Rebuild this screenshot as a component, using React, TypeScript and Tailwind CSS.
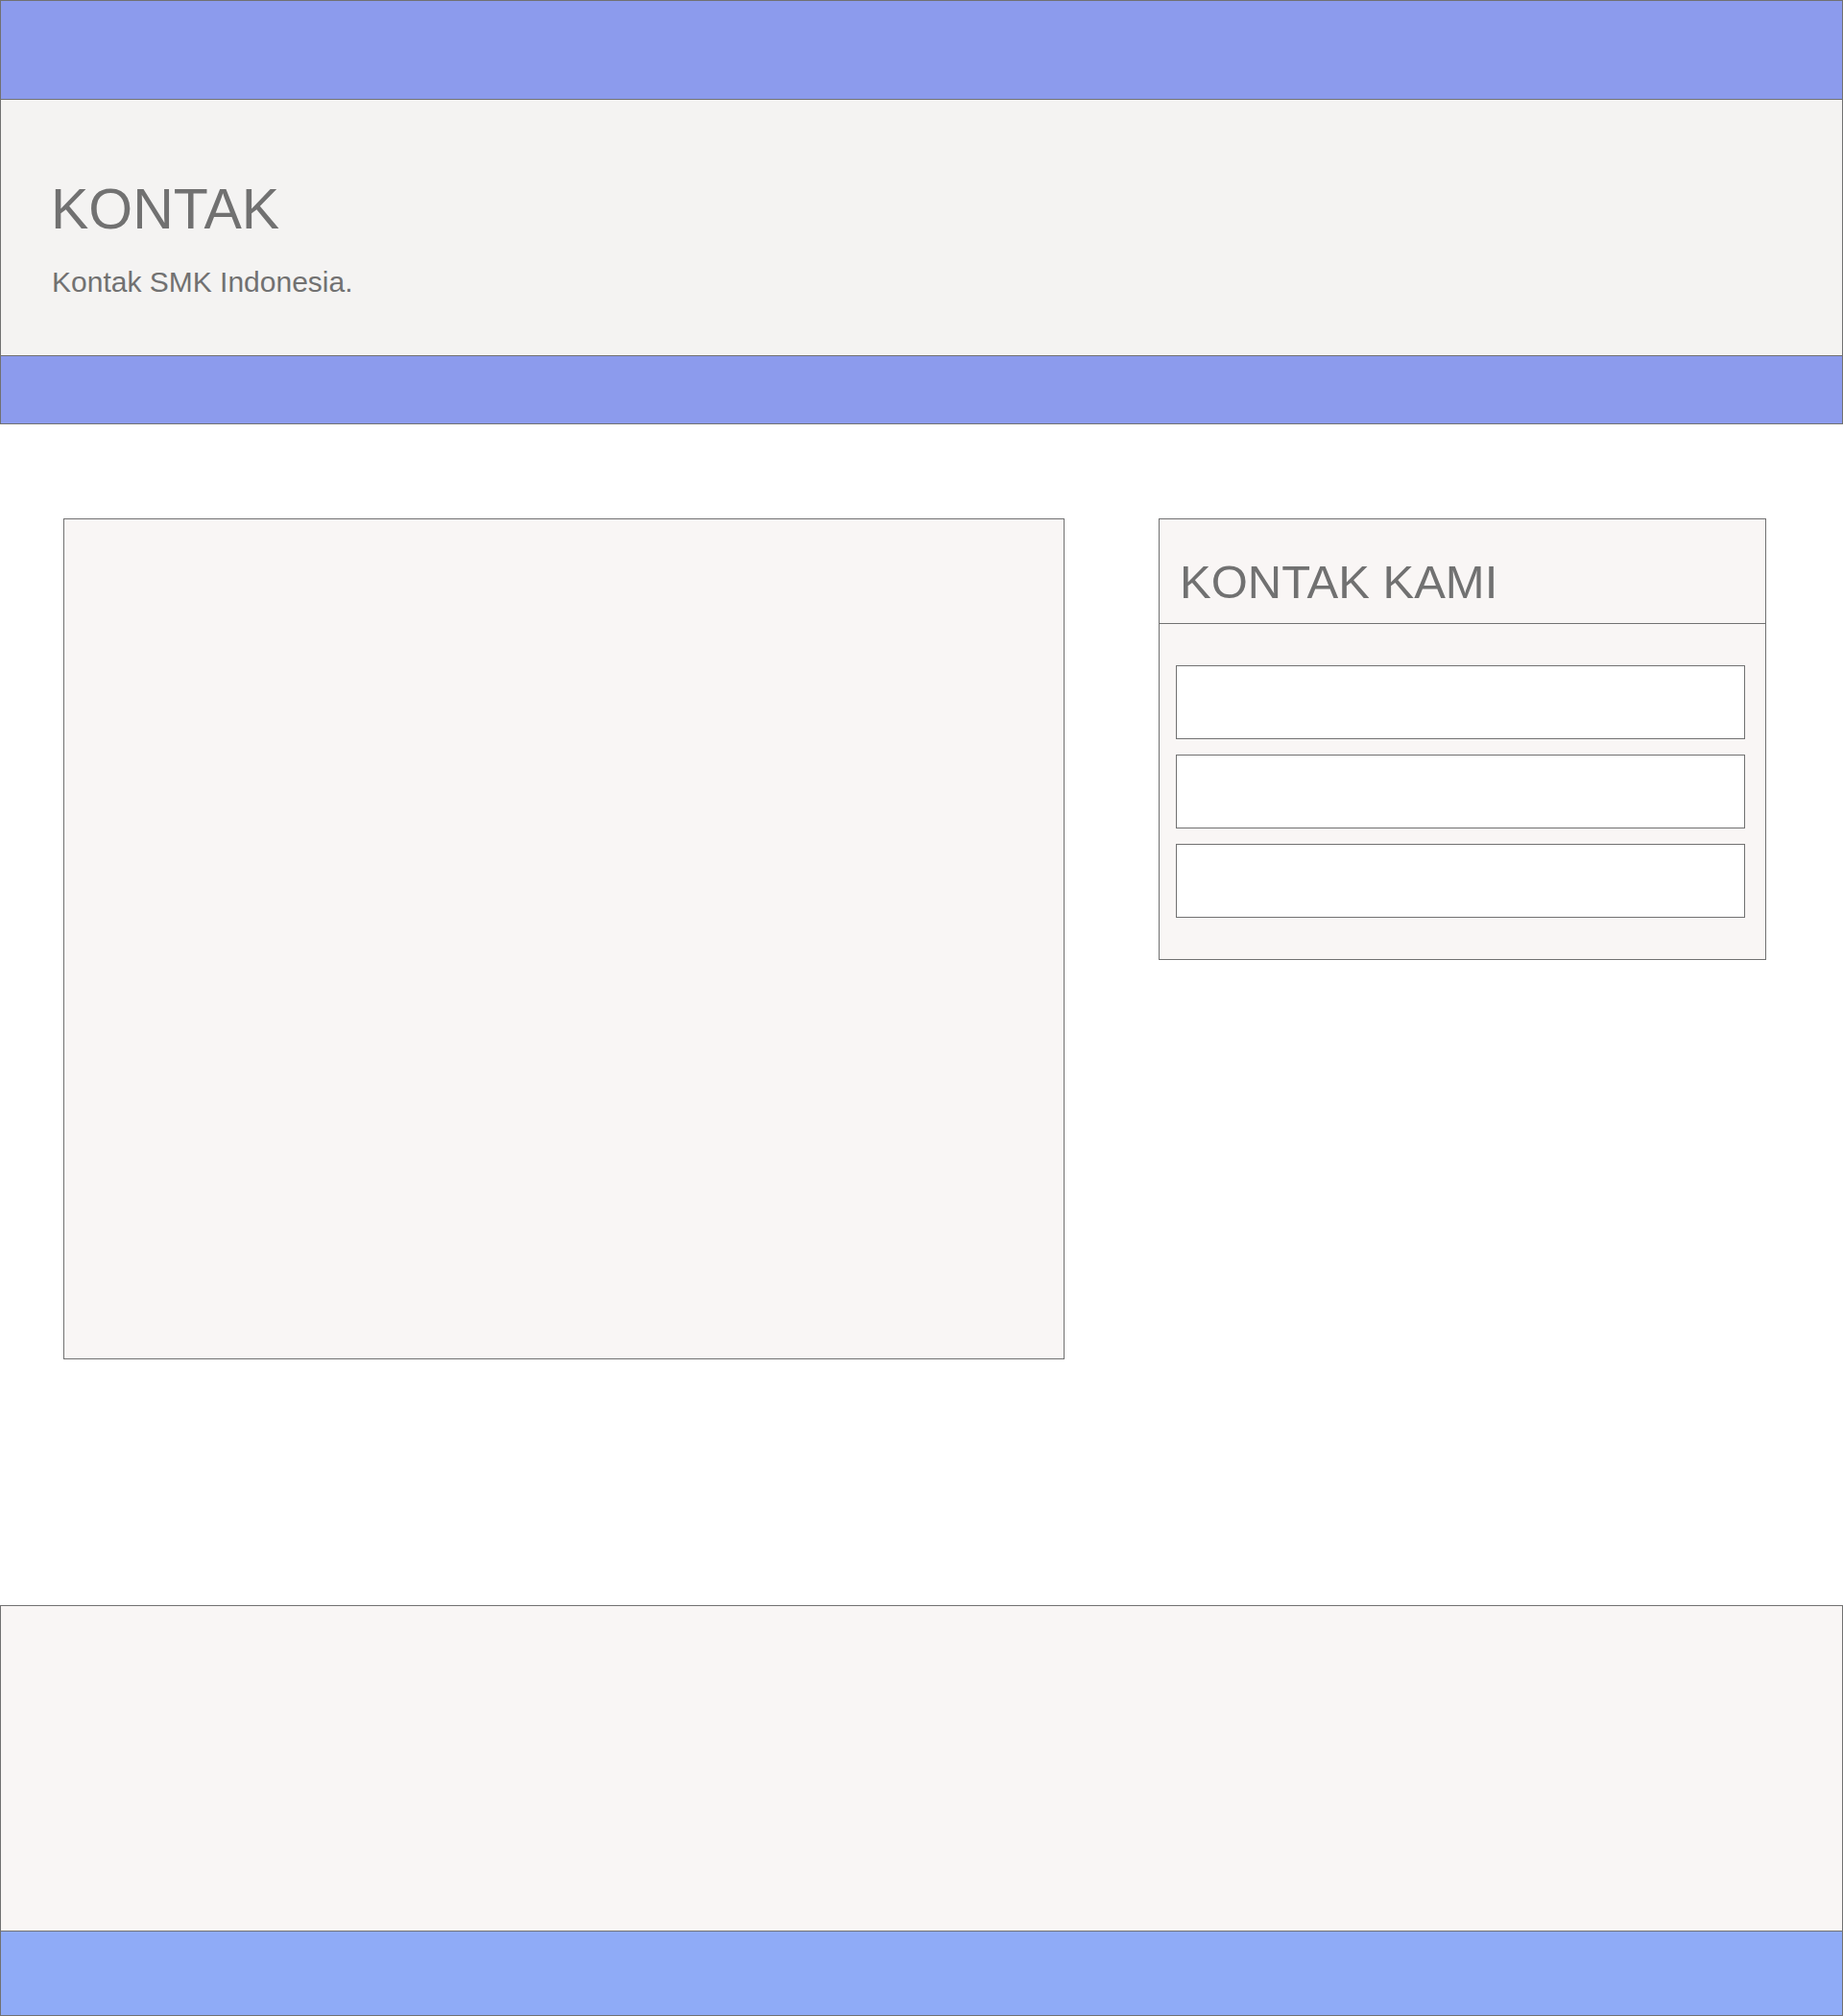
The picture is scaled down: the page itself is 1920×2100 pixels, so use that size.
import React from "react";

export default function App() {
  const font = { fontFamily: '"Liberation Sans", Arial, sans-serif' };
  return (
    <div className="w-[1920px] min-h-[2100px] bg-white text-[#717171]" style={font}>
      <div className="h-[104px] border border-[#717171] bg-[#8c9bed]" />
      <div className="h-[267px] border-x border-b border-[#717171] bg-[#f4f3f2] pl-[52px] pt-[84px]">
        <h1 className="text-[59px] leading-[60px] font-normal">KONTAK</h1>
        <p className="mt-[31px] pl-[1px] text-[30px] leading-[30px]">Kontak SMK Indonesia.</p>
      </div>
      <div className="h-[71px] border-x border-b border-[#717171] bg-[#8c9bed]" />

      <div className="mt-[98px] flex items-start pl-[66px] gap-[98px]">
        <div className="w-[1043px] h-[876px] border border-[#717171] bg-[#f9f6f5]" />
        <div className="w-[633px] border border-[#717171] bg-[#f9f6f5]">
          <div className="h-[109px] border-b border-[#717171] pl-[21px] pt-[41px]">
            <h2 className="text-[49px] leading-[48px] font-normal">KONTAK KAMI</h2>
          </div>
          <div className="flex flex-col gap-[16px] pl-[17px] pt-[43px] pb-[43px]">
            <input className="w-[593px] h-[77px] border border-[#717171] bg-white outline-none" />
            <input className="w-[593px] h-[77px] border border-[#717171] bg-white outline-none" />
            <input className="w-[593px] h-[77px] border border-[#717171] bg-white outline-none" />
          </div>
        </div>
      </div>

      <div className="mt-[256px] h-[340px] border border-[#717171] bg-[#f9f6f5]" />
      <div className="h-[88px] border-x border-b border-[#717171] bg-[#8fabf7]" />
    </div>
  );
}
